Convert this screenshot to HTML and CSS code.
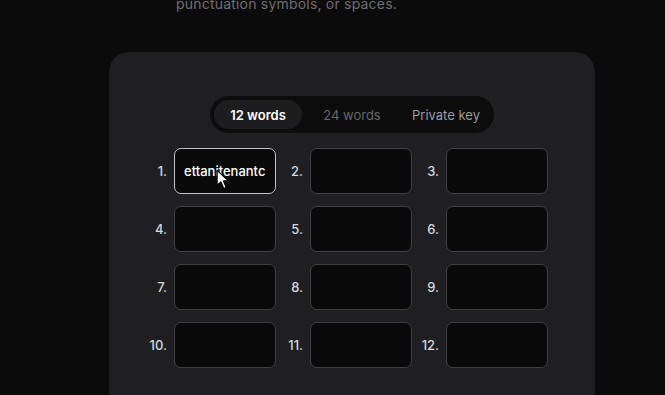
FILE: index.html
```html
<!DOCTYPE html>
<html lang="en">
<head>
  <meta charset="UTF-8">
  <meta name="viewport" content="width=device-width, initial-scale=1.0">
  <title>Import wallet</title>
  <link rel="stylesheet" href="styles.css">
</head>
<body>
  <p class="hint">punctuation symbols, or spaces.</p>
  <div class="card">
    <div class="tabs">
      <button class="tab active">12 words</button>
      <button class="tab">24 words</button>
      <button class="tab hover">Private key</button>
    </div>
    <div class="words">
      <div class="word">
        <span class="num">1.</span>
        <div class="field">
          <input type="text" class="focused" value="ettanitenantc">
          <svg class="pointer" width="15" height="22" viewBox="0 0 14 20">
            <path d="M1 1 L1 15 L4.5 11.8 L7.2 18 L9.6 17 L7 10.9 L11.8 10.9 Z" fill="#fff" stroke="#000" stroke-width="1.2" stroke-linejoin="round"/>
          </svg>
        </div>
      </div>
      <div class="word"><span class="num">2.</span><div class="field"><input type="text"></div></div>
      <div class="word"><span class="num">3.</span><div class="field"><input type="text"></div></div>
      <div class="word"><span class="num">4.</span><div class="field"><input type="text"></div></div>
      <div class="word"><span class="num">5.</span><div class="field"><input type="text"></div></div>
      <div class="word"><span class="num">6.</span><div class="field"><input type="text"></div></div>
      <div class="word"><span class="num">7.</span><div class="field"><input type="text"></div></div>
      <div class="word"><span class="num">8.</span><div class="field"><input type="text"></div></div>
      <div class="word"><span class="num">9.</span><div class="field"><input type="text"></div></div>
      <div class="word"><span class="num">10.</span><div class="field"><input type="text"></div></div>
      <div class="word"><span class="num">11.</span><div class="field"><input type="text"></div></div>
      <div class="word"><span class="num">12.</span><div class="field"><input type="text"></div></div>
    </div>
  </div>
</body>
</html>
```
FILE: styles.css
```css
body {
  font-family: 'Inter', 'Noto Sans', sans-serif;
  background-color: #0b0b0b;
  color: white;
  margin: 0;
  padding: 0;
  height: 100vh;
  overflow: hidden;
}
.hint {
  margin: -6px 0 0 176px;
  font-size: 14px;
  line-height: 20px;
  color: #6e6e72;
  letter-spacing: 0.2px;
}
.card {
  margin: 38px 0 0 109px;
  width: 486px;
  height: 343px;
  box-sizing: border-box;
  background-color: #1f1f21;
  border-radius: 20px 20px 0 0;
  padding: 44px 0 0 31px;
}
.tabs {
  display: flex;
  gap: 6px;
  width: fit-content;
  margin-left: 70px;
  padding: 4px;
  background-color: #0c0c0c;
  border-radius: 999px;
}
.tab {
  width: 88px;
  height: 29px;
  border: none;
  border-radius: 999px;
  background: transparent;
  font-family: inherit;
  font-size: 13px;
  color: #66666a;
  cursor: pointer;
}
.tab.active {
  background-color: #1d1d1f;
  color: #fff;
  font-weight: 600;
}
.tab.hover {
  color: #9b9b9f;
}
.words {
  display: grid;
  grid-template-columns: repeat(3, 136px);
  row-gap: 12px;
  margin-top: 15px;
}
.word {
  display: flex;
  align-items: center;
  gap: 7px;
}
.num {
  width: 27px;
  text-align: right;
  font-size: 13px;
  font-weight: 500;
  color: #d6d6da;
}
.field {
  position: relative;
}
.field input {
  width: 102px;
  height: 46px;
  box-sizing: border-box;
  padding: 0 9px;
  background-color: #0a0a0a;
  border: 1px solid #3f3f42;
  border-radius: 7px;
  color: #fff;
  font-family: inherit;
  font-size: 13px;
  font-weight: 500;
  outline: none;
}
.field input.focused {
  border-color: #c4c4c8;
}
.pointer {
  position: absolute;
  left: 42px;
  top: 21px;
}
```
